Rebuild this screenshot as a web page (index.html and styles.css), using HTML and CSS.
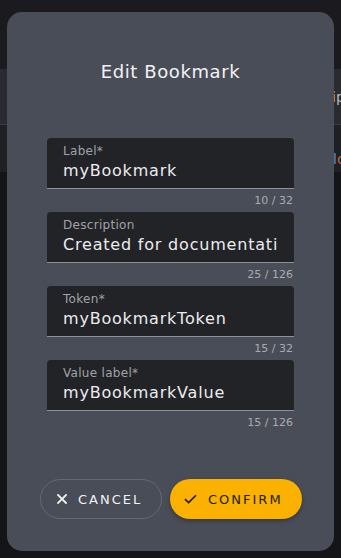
FILE: index.html
```html
<!DOCTYPE html>
<html>
<head>
<meta charset="utf-8">
<link rel="stylesheet" href="styles.css">
</head>
<body>
<div class="page">
  <div class="topbar"></div>
  <div class="band1"><span class="tip"><span class="tip-y">i</span>p</span></div>
  <div class="band2"><span class="lo"><span class="lo-b">l</span>o</span></div>
  <div class="rest"></div>
</div>
<div class="dialog">
  <h1 class="title">Edit Bookmark</h1>
  <div class="fields">
    <div class="field">
      <div class="box">
        <div class="label">Label*</div>
        <div class="value">myBookmark</div>
      </div>
      <div class="counter">10 / 32</div>
    </div>
    <div class="field">
      <div class="box">
        <div class="label">Description</div>
        <div class="value">Created for documentation purposes</div>
      </div>
      <div class="counter">25 / 126</div>
    </div>
    <div class="field">
      <div class="box">
        <div class="label">Token*</div>
        <div class="value">myBookmarkToken</div>
      </div>
      <div class="counter">15 / 32</div>
    </div>
    <div class="field">
      <div class="box">
        <div class="label">Value label*</div>
        <div class="value">myBookmarkValue</div>
      </div>
      <div class="counter">15 / 126</div>
    </div>
  </div>
  <div class="actions">
    <button class="btn btn-cancel">
      <svg class="icon-x" width="10" height="10" viewBox="0 0 10 10"><path d="M1 1L9 9M9 1L1 9" stroke="#f2f2f4" stroke-width="1.8" stroke-linecap="square" fill="none"/></svg>
      <span>CANCEL</span>
    </button>
    <button class="btn btn-confirm">
      <svg class="icon-check" width="13" height="10" viewBox="0 0 13 10"><path d="M1 5.2L4.6 8.6L12 1.2" stroke="#1c1c1c" stroke-width="1.6" fill="none"/></svg>
      <span>CONFIRM</span>
    </button>
  </div>
</div>
</body>
</html>
```
FILE: styles.css
```css
* { box-sizing: border-box; }
html, body { margin: 0; padding: 0; }
body {
  width: 341px;
  height: 558px;
  overflow: hidden;
  background: #141518;
  font-family: "DejaVu Sans", sans-serif;
  position: relative;
}
.page { display: flex; flex-direction: column; height: 558px; }
.topbar { height: 69px; background: #1b1b1f; }
.band1 {
  height: 56px;
  background: #2a2b30;
  border-bottom: 1px solid #3b3c41;
  padding: 20px 0 0 332px;
  font-size: 14px;
  color: #b8b8bc;
  white-space: nowrap;
  overflow: hidden;
}
.tip-y { color: #d9a42b; }
.band2 {
  height: 47px;
  background: #1f2024;
  padding: 26px 0 0 333px;
  font-size: 14px;
  color: #c8603f;
  white-space: nowrap;
  overflow: hidden;
}
.lo-b { color: #5b8fd6; }
.rest { flex: 1; background: #141518; }

.dialog {
  position: absolute;
  left: 7px;
  top: 12px;
  width: 327px;
  height: 539px;
  background: #494d57;
  border-radius: 15px;
  padding: 48px 40px 32px;
  display: flex;
  flex-direction: column;
}
.title {
  margin: 0 0 54px;
  font-size: 18px;
  line-height: 24px;
  font-weight: normal;
  letter-spacing: 0.6px;
  color: #f2f2f4;
  text-align: center;
}
.fields { display: flex; flex-direction: column; }
.field { display: flex; flex-direction: column; }
.box {
  background: #222327;
  border-radius: 4px 4px 0 0;
  border-bottom: 1px solid #8e9197;
  padding: 5px 16px 5px 16px;
  height: 51px;
  overflow: hidden;
}
.label {
  font-size: 12px;
  line-height: 16px;
  letter-spacing: 0.3px;
  color: #a0a2a8;
}
.value {
  font-size: 16px;
  line-height: 24px;
  letter-spacing: 0.8px;
  color: #ececee;
  white-space: nowrap;
  overflow: hidden;
}
.counter {
  font-size: 11px;
  line-height: 16px;
  padding: 4px 1px 3px 0;
  text-align: right;
  color: #a9abb1;
}
.actions {
  margin-top: auto;
  display: flex;
  justify-content: center;
  gap: 8px;
  padding-left: 1px;
}
.btn {
  flex: none;
  height: 40px;
  border-radius: 20px;
  display: flex;
  align-items: center;
  font-family: "DejaVu Sans", sans-serif;
  font-size: 13px;
  letter-spacing: 2px;
  cursor: pointer;
}
.btn-cancel {
  width: 122px;
  background: transparent;
  border: 1px solid #656972;
  color: #f2f2f4;
  padding: 0 0 0 16px;
  gap: 11px;
}
.btn-confirm {
  width: 132px;
  background: #fab100;
  border: none;
  color: #1c1c1c;
  padding: 0 0 0 14px;
  gap: 11px;
  box-shadow: 0 2px 4px rgba(0,0,0,0.3);
}
.icon-x, .icon-check { flex: none; }
```
